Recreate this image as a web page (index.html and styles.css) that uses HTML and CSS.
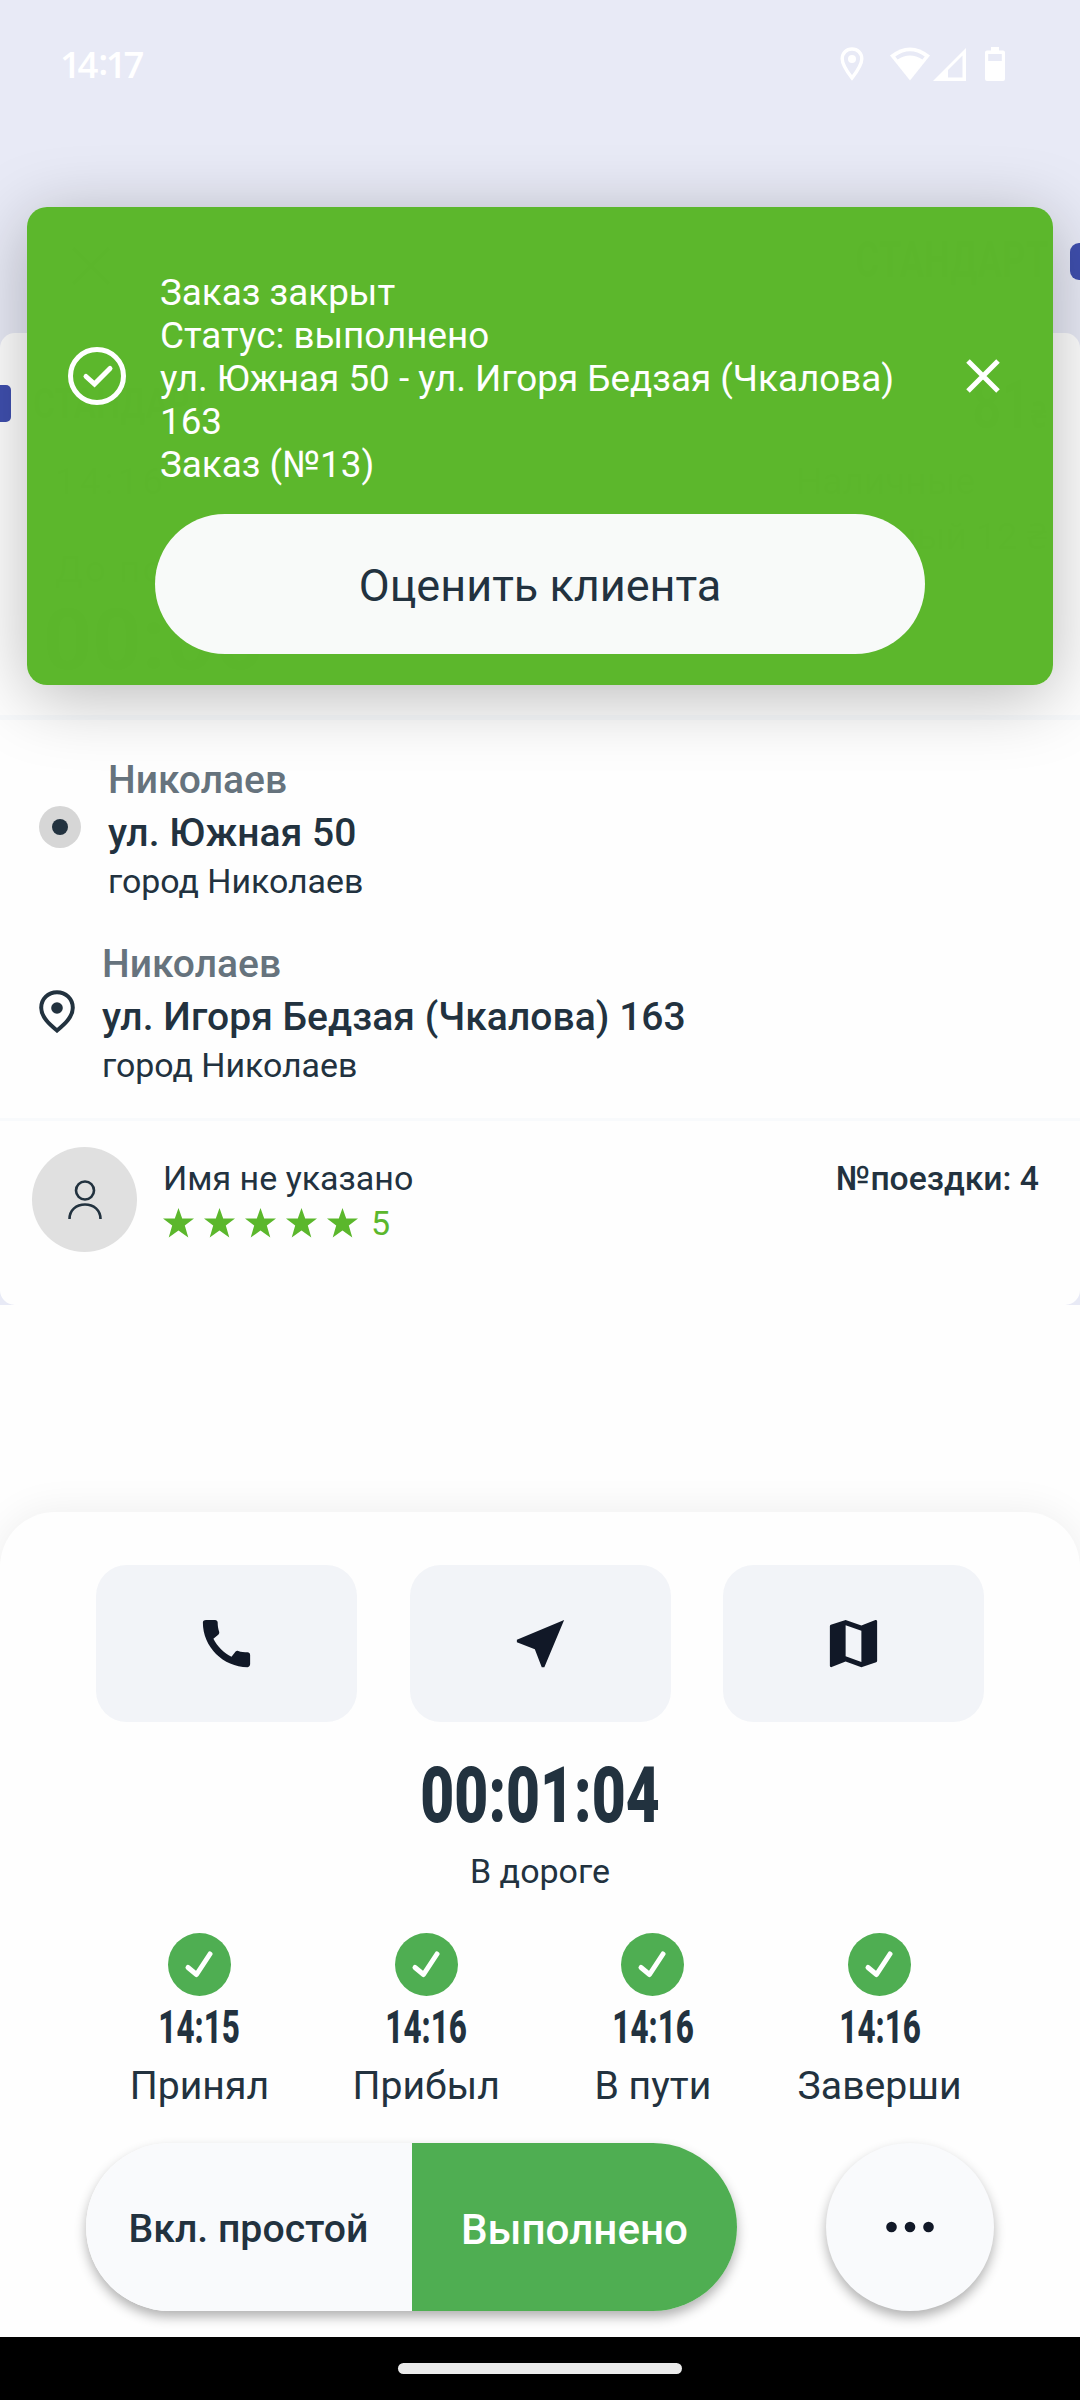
FILE: index.html
```html
<!DOCTYPE html>
<html lang="ru">
<head>
<meta charset="utf-8">
<title>Заказ</title>
<link rel="stylesheet" href="styles.css">
</head>
<body>
<div class="screen">
  <header class="status-bar">
    <span class="clock">14<span class="colon">:</span>17</span>
    <div class="status-icons">
      <svg class="s-pin" width="24" height="34" viewBox="0 0 24 34"><path d="M12 2C6.500 2 2.200 6.200 2.200 11.800 2.200 18.500 12 31 12 31S21.800 18.500 21.800 11.800C21.800 6.200 17.500 2 12 2Z" fill="none" stroke="#fff" stroke-width="3.400"/><circle cx="12" cy="12" r="4" fill="#fff"/></svg>
      <svg class="s-wifi" width="40" height="34" viewBox="0 0 40 34"><path d="M0 8.500Q20-7.500 40 8.500L20 33.500Z" fill="#fff"/><path d="M5.200 9.600Q20-1 34.800 9.600L32.400 12.600Q20 4.500 7.600 12.600Z" fill="#e8eaf6"/></svg>
      <svg class="s-cell" width="33" height="33" viewBox="0 0 33 33"><path fill-rule="evenodd" d="M0 33 33 0V33ZM15 22V29.500H29.500V7.500Z" fill="#fff"/></svg>
      <svg class="s-bat" width="20" height="34" viewBox="0 0 20 34"><path fill-rule="evenodd" d="M6 0h8v3.500h4a2 2 0 0 1 2 2V32a2 2 0 0 1-2 2H2a2 2 0 0 1-2-2V5.500a2 2 0 0 1 2-2H6ZM3.200 7v7h13.600V7Z" fill="#fff"/></svg>
    </div>
  </header>

  <div class="top-bar">
    <svg width="40" height="40" viewBox="0 0 40 40"><path d="M2 2 38 38M38 2 2 38" stroke="#22323f" stroke-width="4"/></svg>
    <span class="tariff">СТАНДАРТ</span>
    <i class="tag tag-right"></i>
  </div>

  <main class="card">
    <section class="summary">
      <div class="sum-row sum-price"><i class="tag tag-left"></i><span class="class-name">СТАНДАРТ</span><span class="price">81<small>₴</small></span></div>
      <div class="sum-row sum-pay"><span>14:16</span><span class="cash">Наличные</span></div>
      <div class="sum-row sum-cashless"><span>Безналичный 12 ₴</span></div>
      <div class="sum-row sum-until"><span>До подачи</span></div>
      <div class="sum-row sum-wait"><span>00:00</span></div>
    </section>

    <section class="route">
      <div class="stop">
        <svg width="42" height="42" viewBox="0 0 42 42"><circle cx="21" cy="21" r="21" fill="#d6d6d6"/><circle cx="21" cy="21" r="8" fill="#22323f"/></svg>
        <div class="stop-text"><p class="city">Николаев</p><p class="street">ул. Южная 50</p><p class="town">город Николаев</p></div>
      </div>
      <div class="stop stop-end">
        <svg width="36" height="43" viewBox="0 0 36 43"><path d="M18 2.200C9.100 2.200 2.200 9 2.200 17.800c0 9.800 9.600 17.500 15.800 22.700 6.200-5.200 15.800-12.900 15.800-22.700C33.800 9 26.900 2.200 18 2.200Z" fill="none" stroke="#22323f" stroke-width="4"/><circle cx="18" cy="18" r="5.800" fill="#22323f"/></svg>
        <div class="stop-text"><p class="city">Николаев</p><p class="street">ул. Игоря Бедзая (Чкалова) 163</p><p class="town">город Николаев</p></div>
      </div>
    </section>

    <section class="client">
      <div class="avatar"><svg width="34" height="40" viewBox="0 0 34 40"><circle cx="17" cy="10.500" r="9" fill="none" stroke="#22323f" stroke-width="2.600"/><path d="M1.500 39C1.500 30 8.300 24.500 17 24.500S32.500 30 32.500 39" fill="none" stroke="#22323f" stroke-width="2.600"/></svg></div>
      <div class="client-text">
        <span class="client-name">Имя не указано</span>
        <div class="rating">
          <svg width="195" height="30" viewBox="0 0 195 30" fill="#5bb72c"><defs><path id="star" d="M15.500 0 19.200 10.400H31L21.800 17.500 25.300 29.500 15.500 22.500 5.700 29.500 9.200 17.500 0 10.400H11.800Z"/></defs><use href="#star"/><use href="#star" x="41"/><use href="#star" x="82"/><use href="#star" x="123"/><use href="#star" x="164"/></svg>
          <span>5</span>
        </div>
      </div>
      <span class="trips">№поездки: 4</span>
    </section>
  </main>

  <section class="sheet">
    <div class="actions">
      <button class="action"><svg width="63" height="63" viewBox="0 0 24 24"><path d="M20.010 15.380c-1.230 0-2.420-.2-3.530-.56-.35-.12-.74-.03-1.010.24l-1.570 1.970c-2.830-1.350-5.480-3.900-6.890-6.830l1.950-1.660c.27-.28.35-.67.24-1.020-.37-1.110-.56-2.300-.56-3.530 0-.54-.45-.99-.99-.99H4.190C3.650 3 3 3.240 3 3.990 3 13.280 10.730 21 20.010 21c.71 0 .99-.63.99-1.180v-3.450c0-.54-.45-.99-.99-.99z"/></svg></button>
      <button class="action"><svg width="63" height="63" viewBox="0 0 24 24"><path d="M21 3 3 10.530v.98l6.840 2.650L12.480 21h.98L21 3z"/></svg></button>
      <button class="action"><svg width="63" height="63" viewBox="0 0 24 24"><path d="M20.500 3l-.16.030L15 5.100 9 3 3.360 4.900c-.21.070-.36.250-.36.480V20.500c0 .28.220.5.500.5l.16-.03L9 18.900l6 2.100 5.640-1.900c.21-.07.36-.25.36-.48V3.500c0-.28-.22-.5-.5-.5zM15 19l-6-2.110V5l6 2.110V19z"/></svg></button>
    </div>
    <div class="timer"><span>00:01:04</span></div>
    <p class="state">В дороге</p>
    <div class="steps">
      <div class="step"><svg width="63" height="63" viewBox="0 0 63 63"><circle cx="31.500" cy="31.500" r="31.500"/><path d="M20 34.500 28.500 41.500 42 21"/></svg><b>14:15</b><span>Принял</span></div>
      <div class="step"><svg width="63" height="63" viewBox="0 0 63 63"><circle cx="31.500" cy="31.500" r="31.500"/><path d="M20 34.500 28.500 41.500 42 21"/></svg><b>14:16</b><span>Прибыл</span></div>
      <div class="step"><svg width="63" height="63" viewBox="0 0 63 63"><circle cx="31.500" cy="31.500" r="31.500"/><path d="M20 34.500 28.500 41.500 42 21"/></svg><b>14:16</b><span>В пути</span></div>
      <div class="step"><svg width="63" height="63" viewBox="0 0 63 63"><circle cx="31.500" cy="31.500" r="31.500"/><path d="M20 34.500 28.500 41.500 42 21"/></svg><b>14:16</b><span>Заверши</span></div>
    </div>
    <div class="controls">
      <div class="segment"><button class="idle">Вкл. простой</button><button class="done">Выполнено</button></div>
      <button class="more"><svg width="50" height="12" viewBox="0 0 50 12"><circle cx="6.500" cy="6" r="5.300"/><circle cx="25" cy="6" r="5.300"/><circle cx="43.500" cy="6" r="5.300"/></svg></button>
    </div>
  </section>

  <footer class="nav-bar"><i></i></footer>

  <aside class="toast">
    <svg class="toast-ok" width="58" height="58" viewBox="0 0 58 58" fill="none" stroke="#fff"><circle cx="29" cy="29" r="26.500" stroke-width="5"/><path d="M18 29.500 26.500 37 42 21.500" stroke-width="5" stroke-linecap="round"/></svg>
    <div class="toast-text"><p>Заказ закрыт</p><p>Статус: выполнено</p><p>ул. Южная 50 - ул. Игоря Бедзая (Чкалова)<br>163</p><p>Заказ (№13)</p></div>
    <svg class="toast-close" width="34" height="34" viewBox="0 0 34 34"><path d="M2 2 32 32M32 2 2 32" stroke="#fff" stroke-width="5"/></svg>
    <button class="rate">Оценить клиента</button>
  </aside>
</div>
</body>
</html>
```
FILE: styles.css
```css
* { box-sizing: border-box; margin: 0; padding: 0; }
body { background: #fefefe; font-family: Roboto, "Noto Sans", sans-serif; color: #22323f; }
button { font: inherit; color: inherit; border: 0; cursor: pointer; }
svg { display: block; flex: none; }
.screen { position: relative; width: 1080px; height: 2400px; overflow: hidden; display: flex; flex-direction: column; background: linear-gradient(#e8eaf6 1305px, #fefefe 1305px); }

.status-bar { flex: none; height: 128px; padding: 0 75px 0 60px; display: flex; align-items: center; justify-content: space-between; color: #fff; }
.clock { font-family: "Open Sans", sans-serif; font-size: 36.500px; font-weight: 600; letter-spacing: -3.300px; }
.colon { position: relative; top: -3px; margin: 0 1px 0 3px; }
.status-icons { display: flex; align-items: center; }
.s-wifi { margin-left: 26px; }
.s-cell { margin-left: 3px; }
.s-bat { margin-left: 19px; }

.top-bar { flex: none; height: 205px; padding-left: 71px; padding-top: 71px; display: flex; align-items: center; }
.tariff { margin-left: auto; margin-right: 22px; margin-top: -12px; font-size: 50px; font-weight: 700; transform: scaleX(.730); transform-origin: 100% 50%; }
.tag { display: block; height: 37px; background: #3f4fae; }
.tag-right { width: 10px; margin-top: -9px; border-radius: 9px 0 0 9px; }
.tag-left { width: 11px; border-radius: 0 5px 5px 0; }

.card { flex: none; height: 972px; background: #fefefe; border-radius: 15px; overflow: hidden; }
.summary { height: 387px; padding-top: 52px; border-bottom: 5px solid #f8fafc; font-size: 37px; }
.sum-row { display: flex; white-space: nowrap; padding: 0 33px 0 55px; }
.sum-price { height: 67px; padding-left: 0; }
.class-name { margin-left: 22px; font-size: 42px; line-height: 37px; font-weight: 700; transform: scaleX(.800); transform-origin: 0 0; }
.price { margin-left: auto; font-size: 68px; line-height: 40px; font-weight: 700; transform: scaleX(.750); transform-origin: 100% 0; }
.price small { font-size: 38px; }
.sum-pay { height: 58px; line-height: 60px; letter-spacing: 4px; justify-content: space-between; padding-right: 105px; }
.cash { letter-spacing: 0; }
.sum-cashless { height: 50px; line-height: 54px; justify-content: flex-end; }
.sum-until { height: 50px; line-height: 20px; letter-spacing: 2px; }
.sum-wait { padding-left: 43px; font-size: 86px; line-height: 60px; font-weight: 700; }

.route { height: 401px; padding: 31px 39px 0; border-bottom: 3px solid #f8fafc; }
.stop { height: 184px; display: flex; align-items: flex-start; gap: 27px; }
.stop svg { margin-top: 55px; }
.stop-text { padding-top: 1px; }
.city, .street { font-size: 39px; line-height: 56px; height: 53px; font-weight: 500; white-space: nowrap; }
.street { letter-spacing: .05px; }
.city { color: #66737d; }
.town { font-size: 33.900px; line-height: 48px; }

.client { display: flex; align-items: flex-start; padding: 26px 41px 0 32px; font-size: 34px; line-height: 40px; }
.avatar { width: 105px; height: 105px; border-radius: 50%; background: #e0e0e0; display: flex; align-items: center; justify-content: center; }
.client-text { margin-left: 26px; padding-top: 11px; }
.rating { display: flex; align-items: center; gap: 13px; margin-top: 5px; color: #5bb72c; }
.trips { margin-left: auto; padding-top: 12px; font-size: 33.700px; font-weight: 500; }

.sheet { flex: none; height: 825px; margin-top: 207px; border-radius: 55px 55px 0 0; background: #fefefe; box-shadow: 0 0 40px rgba(0,0,0,.07); }
.actions { display: flex; justify-content: space-between; padding: 53px 96px 0; }
.action { width: 261px; height: 157px; border-radius: 31px; background: #f2f4f8; display: flex; align-items: center; justify-content: center; fill: #111827; }
.timer { height: 104px; margin-top: 22px; display: flex; align-items: center; justify-content: center; }
.timer span { font-size: 77px; font-weight: 900; transform: scaleX(.762); }
.state { height: 46px; text-align: center; font-size: 34px; line-height: 46px; }
.steps { display: grid; grid-template-columns: repeat(4, 1fr); padding: 39px 87px 0 86px; }
.step { display: flex; flex-direction: column; align-items: center; }
.step svg { fill: #4fae52; }
.step path { fill: none; stroke: #fff; stroke-width: 5; stroke-linecap: round; stroke-linejoin: round; }
.step b { font-size: 45.500px; line-height: 63px; font-weight: 800; transform: scaleX(.690); }
.step span { font-size: 39.200px; line-height: 54px; }
.controls { display: flex; justify-content: space-between; padding: 0 86px; margin-top: 30px; }
.segment { width: 651px; height: 168px; border-radius: 84px; overflow: hidden; display: flex; box-shadow: 0 6px 12px rgba(0,0,0,.3); }
.idle { width: 326px; background: #f9fafc; font-size: 39.200px; font-weight: 500; padding: 4px 1px 0 0; }
.done { flex: 1; background: #4fae52; color: #fff; font-size: 42.200px; font-weight: 500; padding-top: 4px; }
.more { width: 168px; height: 168px; border-radius: 50%; background: #f9fafc; box-shadow: 0 6px 12px rgba(0,0,0,.3); display: flex; align-items: center; justify-content: center; fill: #111827; }

.nav-bar { flex: none; height: 63px; background: #000; display: flex; justify-content: center; padding-top: 26px; }
.nav-bar i { width: 284px; height: 11px; border-radius: 6px; background: #ebebeb; }

.toast { position: absolute; left: 27px; top: 207px; width: 1026px; height: 478px; border-radius: 20px; background: rgba(91,183,43,.995); box-shadow: 0 12px 70px rgba(0,0,0,.27); color: #fff; display: grid; grid-template: 307px 140px / 128px 1fr 128px; align-items: center; }
.toast-ok { margin: 31px 0 0 41px; }
.toast-text { padding: 35px 0 0 5px; font-size: 36.800px; line-height: 43px; white-space: nowrap; }
.toast-close { margin: 31px 0 0 41px; }
.rate { grid-column: 2; height: 140px; padding-top: 3px; border-radius: 70px; background: #f8faf9; color: #22323f; font-size: 45px; }
```
